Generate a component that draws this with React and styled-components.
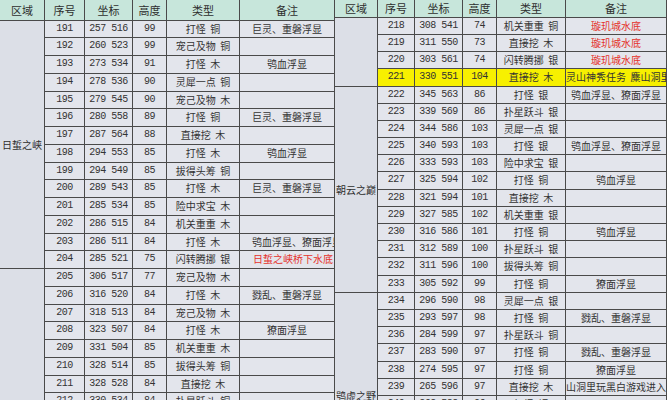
import React from 'react'
import styled, { createGlobalStyle } from 'styled-components'

const GlobalStyle = createGlobalStyle`
  html, body {
    margin: 0;
    padding: 0;
    background: #dfe1e9;
  }
  body {
    font-family: "Noto Sans CJK SC", "Noto Sans", sans-serif;
  }
`

const leftRows = [
  ['191', '257 516', '99', '打怪  铜', '巨灵、重磐浮显'],
  ['192', '260 523', '99', '宠己及物  铜', ''],
  ['193', '273 534', '91', '打怪  木', '鸮血浮显'],
  ['194', '278 536', '90', '灵犀一点  铜', ''],
  ['195', '279 545', '90', '宠己及物  木', ''],
  ['196', '280 558', '89', '打怪  铜', '巨灵、重磐浮显'],
  ['197', '287 564', '88', '直接挖  木', ''],
  ['198', '294 553', '85', '打怪  木', '鸮血浮显'],
  ['199', '294 549', '85', '拔得头筹  铜', ''],
  ['200', '289 543', '85', '打怪  木', '巨灵、重磐浮显'],
  ['201', '285 534', '85', '险中求宝  木', ''],
  ['202', '286 515', '84', '机关重重  木', ''],
  ['203', '286 511', '84', '打怪  木', '鸮血浮显、獠面浮显', 'indent'],
  ['204', '285 521', '75', '闪转腾挪  银', '日蜇之峡桥下水底', 'indent red'],
  ['205', '306 517', '77', '宠己及物  木', ''],
  ['206', '316 520', '84', '打怪  木', '戮乱、重磐浮显'],
  ['207', '318 513', '84', '宠己及物  木', ''],
  ['208', '323 507', '84', '打怪  木', '獠面浮显'],
  ['209', '331 504', '85', '机关重重  木', ''],
  ['210', '328 514', '85', '拔得头筹  铜', ''],
  ['211', '328 528', '84', '直接挖  木', ''],
  ['212', '330 534', '84', '扑星跃斗  铜', ''],
]

const rightRows = [
  ['218', '308 541', '74', '机关重重  铜', '璇玑城水底', 'red'],
  ['219', '311 550', '73', '直接挖  木', '璇玑城水底', 'red'],
  ['220', '303 561', '74', '闪转腾挪  银', '璇玑城水底', 'red'],
  ['221', '330 551', '104', '直接挖  木', '灵山神秀任务  麋山洞里', 'hl'],
  ['222', '345 563', '86', '打怪  银', '鸮血浮显、獠面浮显'],
  ['223', '339 569', '86', '扑星跃斗  银', ''],
  ['224', '344 586', '103', '灵犀一点  银', ''],
  ['225', '340 593', '103', '打怪  银', '鸮血浮显、獠面浮显'],
  ['226', '333 593', '103', '险中求宝  银', ''],
  ['227', '325 594', '102', '打怪  铜', '鸮血浮显'],
  ['228', '321 594', '101', '直接挖  木', ''],
  ['229', '327 585', '102', '机关重重  银', ''],
  ['230', '316 586', '101', '打怪  铜', '鸮血浮显'],
  ['231', '312 589', '100', '扑星跃斗  银', ''],
  ['232', '311 596', '100', '拔得头筹  铜', ''],
  ['233', '305 592', '99', '打怪  铜', '獠面浮显'],
  ['234', '296 590', '98', '灵犀一点  银', ''],
  ['235', '293 597', '98', '打怪  铜', '戮乱、重磐浮显'],
  ['236', '284 599', '97', '扑星跃斗  铜', ''],
  ['237', '283 590', '97', '打怪  铜', '戮乱、重磐浮显'],
  ['238', '274 595', '97', '打怪  铜', '獠面浮显'],
  ['239', '265 596', '97', '直接挖  木', '山洞里玩黑白游戏进入'],
  ['240', '262 588', '96', '打怪  铜', ''],
  ['241', '258 581', '96', '灵犀一点  银', ''],
  ['242', '251 577', '95', '打怪  铜', ''],
  ['243', '247 570', '95', '直接挖  木', ''],
  ['244', '240 566', '94', '打怪  铜', ''],
  ['245', '236 559', '94', '扑星跃斗  银', ''],
]

const headers = ['区域', '序号', '坐标', '高度', '类型', '备注']

const Page = styled.div`
  display: flex;
  width: 667px;
  height: 400px;
  overflow: hidden;
`

const Table = styled.div`
  --rh: ${p => p.$row}px;
  flex: none;
  display: grid;
  grid-template-columns: ${p => p.$cols};
  grid-template-rows: ${p => p.$head}px repeat(${p => p.$count}, ${p => p.$row}px);
  align-self: flex-start;
`

const Head = styled.div`
  background: #c7e6db;
  color: #2e2e2e;
  font-size: 11px;
  display: flex;
  align-items: center;
  justify-content: center;
  border-right: 1px solid #4a4a4a;
  border-bottom: 1px solid #4a4a4a;
  box-sizing: border-box;
`

const Region = styled.div`
  grid-column: 1;
  grid-row: span ${p => p.$span};
  background: #dcdfe7;
  color: #2e2e2e;
  font-size: 10px;
  display: flex;
  align-items: center;
  justify-content: center;
  white-space: nowrap;
  border-right: 1px solid #4a4a4a;
  border-bottom: 1px solid #4a4a4a;
  box-sizing: border-box;
  overflow: hidden;
`

const Cell = styled.div`
  background: ${p => (p.$hl ? '#f7f000' : '#e3e5ec')};
  color: ${p => (p.$red ? '#e5322b' : '#333')};
  font-family: ${p =>
    p.$num ? '"Liberation Mono", monospace' : '"Noto Sans CJK SC", "Noto Sans", sans-serif'};
  font-size: 10px;
  letter-spacing: ${p => (p.$num ? '-0.5px' : '0')};
  line-height: calc(var(--rh) - 1px);
  text-align: center;
  white-space: pre;
  overflow: hidden;
  padding-left: ${p => (p.$indent ? '12px' : '0')};
  border-right: 1px solid #4a4a4a;
  border-bottom: 1px solid #4a4a4a;
  box-sizing: border-box;
`

const Sheet = ({ cols, head, row, rows, regions }) => {
  let start = 0
  const starts = {}
  regions.forEach(r => {
    starts[start] = r
    start += r.span
  })
  return (
    <Table $cols={cols} $head={head} $row={row} $count={rows.length}>
      {headers.map(h => (
        <Head key={h}>{h}</Head>
      ))}
      {rows.map((r, i) => {
        const flags = r[5] || ''
        const hl = flags.includes('hl')
        return (
          <React.Fragment key={r[0]}>
            {starts[i] && <Region $span={starts[i].span}>{starts[i].name}</Region>}
            <Cell $num $hl={hl}>{r[0]}</Cell>
            <Cell $num $hl={hl}>{r[1]}</Cell>
            <Cell $num $hl={hl}>{r[2]}</Cell>
            <Cell $hl={hl}>{r[3]}</Cell>
            <Cell $hl={hl} $red={flags.includes('red')} $indent={flags.includes('indent')}>
              {r[4]}
            </Cell>
          </React.Fragment>
        )
      })}
    </Table>
  )
}

const App = () => {
  return (
    <>
      <GlobalStyle />
      <Page>
        <Sheet
          cols="45px 40px 48px 34px 73px 95px"
          head={20.5}
          row={17.75}
          rows={leftRows}
          regions={[
            { name: '日蜇之峡', span: 14 },
            { name: '', span: 8 },
          ]}
        />
        <Sheet
          cols="43px 37px 48px 34px 69px 101px"
          head={17.8}
          row={17.2}
          rows={rightRows}
          regions={[
            { name: '', span: 4 },
            { name: '朝云之巅', span: 12 },
            { name: '鸮虚之野', span: 12 },
          ]}
        />
      </Page>
    </>
  )
}

export default App
